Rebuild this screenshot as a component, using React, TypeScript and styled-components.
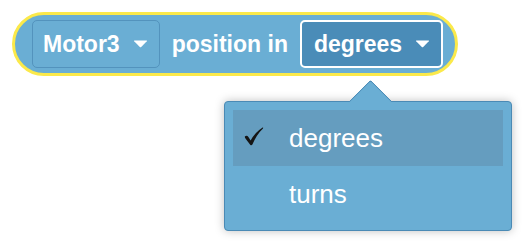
import styled, { createGlobalStyle } from "styled-components"

const GlobalStyle = createGlobalStyle`
  body {
    margin: 0;
    background: #ffffff;
    font-family: "Liberation Sans", Arial, sans-serif;
  }
`

const Stage = styled.div`
  position: relative;
  width: 532px;
  height: 250px;
  padding: 12px 0 0 12px;
  box-sizing: border-box;
`

const Block = styled.div`
  display: inline-flex;
  align-items: center;
  gap: 12px;
  height: 64px;
  box-sizing: border-box;
  padding: 0 12px 0 17px;
  background: #6aaed4;
  border: 3px solid #fbe94a;
  border-radius: 32px;
  color: #ffffff;
  font-size: 23px;
  font-weight: bold;
`

const Label = styled.span`
  white-space: nowrap;
`

const Field = styled.div<{ $active?: boolean }>`
  display: flex;
  align-items: center;
  gap: 13px;
  height: 48px;
  box-sizing: border-box;
  padding: 0 11px 0 ${p => (p.$active ? "12px" : "10px")};
  border-radius: 5px;
  border: ${p => (p.$active ? "2px solid #ffffff" : "1px solid #5393bd")};
  background: ${p => (p.$active ? "#4a8cb8" : "#6aaed4")};
`

const Caret = styled.svg`
  width: 15px;
  height: 8px;
`

const Menu = styled.div`
  position: absolute;
  left: 224px;
  top: 101px;
  width: 288px;
  box-sizing: border-box;
  padding: 8px;
  background: #6aaed4;
  border: 1px solid #4a8ab5;
  border-radius: 4px;
  box-shadow: 0 0 10px rgba(0, 0, 0, 0.25);
`

const Pointer = styled.div`
  position: absolute;
  left: 130px;
  top: -16px;
  width: 30px;
  height: 30px;
  background: #6aaed4;
  border-top: 1px solid #4a8ab5;
  border-left: 1px solid #4a8ab5;
  border-top-left-radius: 3px;
  transform: rotate(45deg);
`

const Item = styled.div<{ $selected?: boolean }>`
  position: relative;
  display: flex;
  align-items: center;
  height: 56px;
  padding-left: 56px;
  background: ${p => (p.$selected ? "#659dbf" : "transparent")};
  color: #ffffff;
  font-size: 26px;
`

const Check = styled.svg`
  position: absolute;
  left: 11px;
  top: 17px;
  width: 20px;
  height: 19px;
`

const DownCaret = () => (
  <Caret viewBox="0 0 15 8">
    <path d="M1.5 0.5 H13.5 Q14.5 0.5 13.8 1.3 L8.2 7 Q7.5 7.7 6.8 7 L1.2 1.3 Q0.5 0.5 1.5 0.5 Z" fill="#ffffff" />
  </Caret>
)

const CheckMark = () => (
  <Check viewBox="0 0 20 19">
    <path
      d="M0.8 9.6 Q2.8 7.8 4.6 10.2 L6.6 13.6 Q11 5.5 18.6 0.6 Q19.6 0.4 19 1.4 Q12.5 7.5 8.4 17.6 Q7.4 19 6.2 17.8 L2 12.2 Q0.6 10.8 0.8 9.6 Z"
      fill="#151515"
    />
  </Check>
)

const App = () => {
  const options = ["degrees", "turns"]
  const current = "degrees"

  return (
    <Stage>
      <GlobalStyle />
      <Block>
        <Field>
          <Label>Motor3</Label>
          <DownCaret />
        </Field>
        <Label>position in</Label>
        <Field $active>
          <Label>{current}</Label>
          <DownCaret />
        </Field>
      </Block>

      <Menu>
        <Pointer />
        {options.map(o => (
          <Item key={o} $selected={o === current}>
            {o === current && <CheckMark />}
            {o}
          </Item>
        ))}
      </Menu>
    </Stage>
  )
}

export default App
